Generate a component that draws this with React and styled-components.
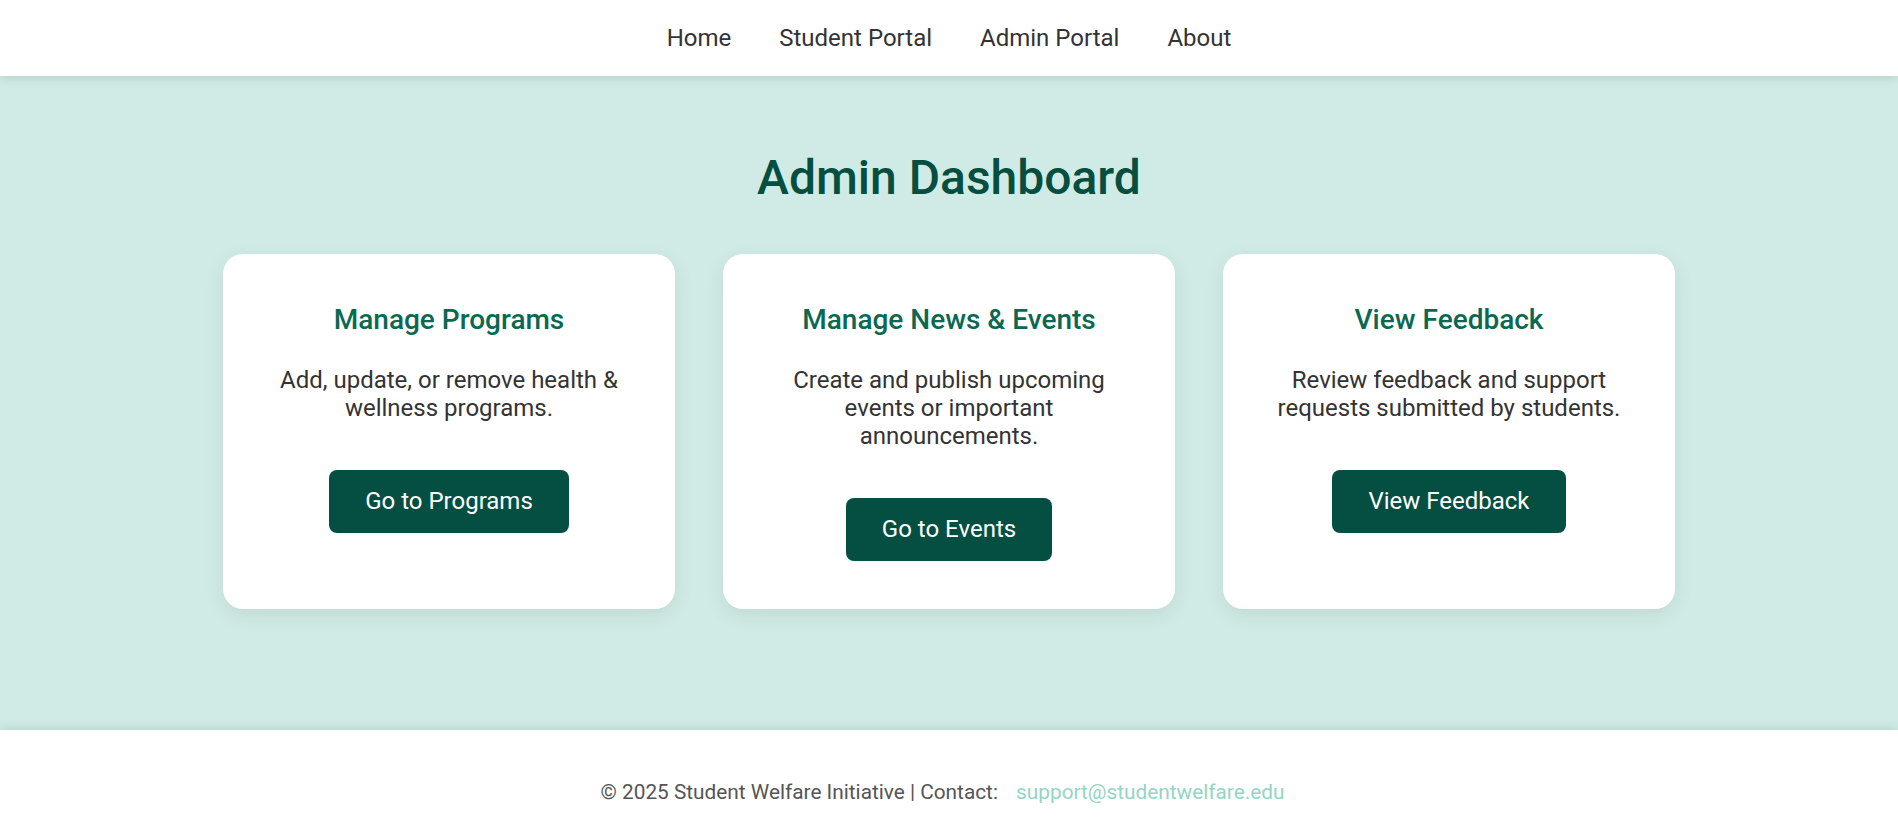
import React from "react";
import styled, { createGlobalStyle } from "styled-components";

const cards = [
  {
    title: "Manage Programs",
    text: "Add, update, or remove health & wellness programs.",
    action: "Go to Programs",
  },
  {
    title: "Manage News & Events",
    text: "Create and publish upcoming events or important announcements.",
    action: "Go to Events",
  },
  {
    title: "View Feedback",
    text: "Review feedback and support requests submitted by students.",
    action: "View Feedback",
  },
];

function App() {
  return (
    <>
      <GlobalStyle />
      <Header>
        <Nav>
          <NavLink href="#">Home</NavLink>
          <NavLink href="#">Student Portal</NavLink>
          <NavLink href="#">Admin Portal</NavLink>
          <NavLink href="#">About</NavLink>
        </Nav>
      </Header>

      <Main>
        <Title>Admin Dashboard</Title>
        <CardGrid>
          {cards.map((card) => (
            <Card key={card.title}>
              <CardTitle>{card.title}</CardTitle>
              <CardText>{card.text}</CardText>
              <ActionButton>{card.action}</ActionButton>
            </Card>
          ))}
        </CardGrid>
      </Main>

      <Footer>
        © 2025 Student Welfare Initiative | Contact:{" "}
        <MailLink href="#">support@studentwelfare.edu</MailLink>
      </Footer>
    </>
  );
}

export default App;

const GlobalStyle = createGlobalStyle`
  * {
    box-sizing: border-box;
  }
  html, body {
    margin: 0;
    padding: 0;
  }
  body {
    font-family: Roboto, "Liberation Sans", Arial, sans-serif;
    background: #ffffff;
    color: #333333;
  }
`;

const Header = styled.header`
  position: relative;
  z-index: 2;
  background: #ffffff;
  box-shadow: 0 2px 10px rgba(0, 0, 0, 0.12);
`;

const Nav = styled.nav`
  display: flex;
  justify-content: center;
  gap: 48px;
  padding: 24px 0;
`;

const NavLink = styled.a`
  font-size: 24px;
  line-height: 28px;
  color: #333333;
  text-decoration: none;
`;

const Main = styled.main`
  background: #d0ebe5;
  padding: 74px 0 121px;
  display: flex;
  flex-direction: column;
  align-items: center;
`;

const Title = styled.h1`
  margin: 0 0 48px;
  font-size: 48px;
  font-weight: 500;
  line-height: 56px;
  color: #064e3f;
`;

const CardGrid = styled.div`
  display: grid;
  grid-template-columns: repeat(3, 452px);
  gap: 48px;
`;

const Card = styled.div`
  display: flex;
  flex-direction: column;
  align-items: center;
  padding: 49px 48px 48px;
  background: #ffffff;
  border-radius: 20px;
  box-shadow: 0 6px 20px rgba(0, 0, 0, 0.08);
  text-align: center;
`;

const CardTitle = styled.h3`
  margin: 0 0 30px;
  font-size: 28px;
  font-weight: 500;
  line-height: 33px;
  color: #0a6950;
`;

const CardText = styled.p`
  margin: 0 0 48px;
  font-size: 24px;
  line-height: 28px;
  color: #333333;
`;

const ActionButton = styled.button`
  padding: 17px 36px 18px;
  font-family: inherit;
  font-size: 24px;
  line-height: 28px;
  color: #ffffff;
  background: #054f42;
  border: none;
  border-radius: 8px;
  cursor: pointer;
`;

const Footer = styled.footer`
  position: relative;
  z-index: 1;
  background: #ffffff;
  box-shadow: 0 -2px 10px rgba(0, 0, 0, 0.1);
  padding: 50px 0 18px;
  text-align: center;
  font-size: 20.8px;
  line-height: 24px;
  color: #555555;
`;

const MailLink = styled.a`
  margin: 0 13px;
  color: #94d5c4;
  text-decoration: none;
`;
